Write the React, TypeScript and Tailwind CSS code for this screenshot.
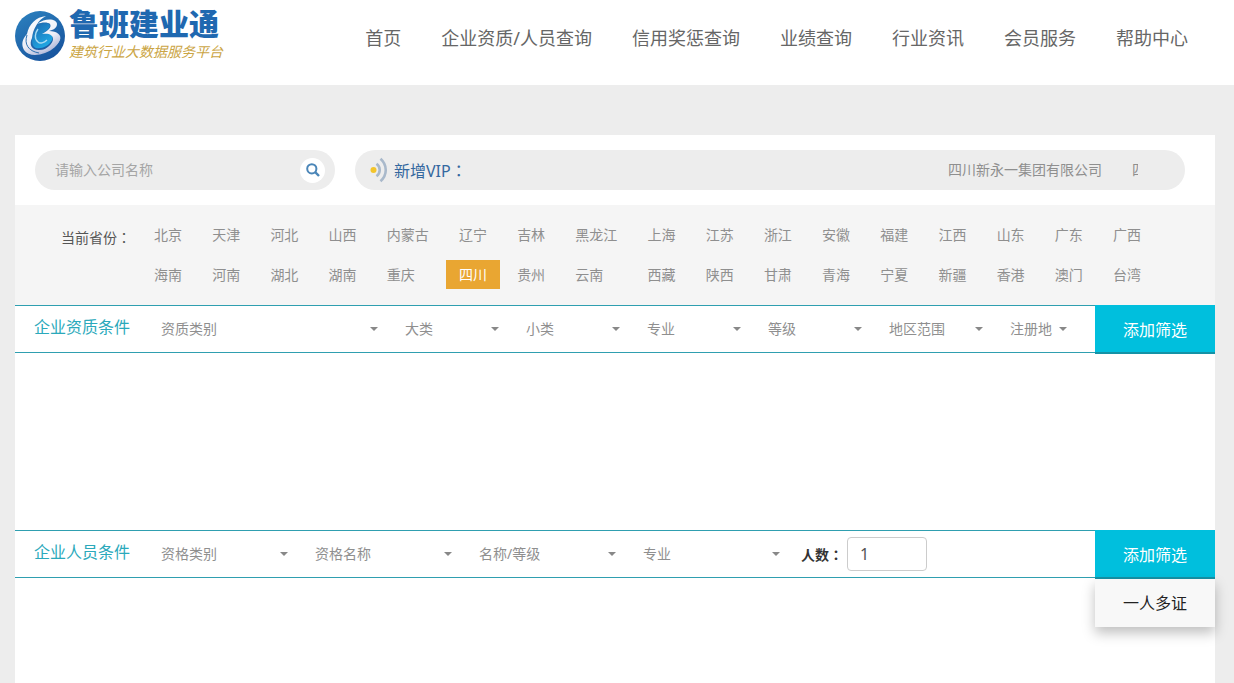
import React, { useState } from 'react';
import clsx from 'clsx';

const NAV = ['首页', '企业资质/人员查询', '信用奖惩查询', '业绩查询', '行业资讯', '会员服务', '帮助中心'];

const PROVINCES = [
  '北京', '天津', '河北', '山西', '内蒙古', '辽宁', '吉林', '黑龙江', '上海', '江苏', '浙江', '安徽', '福建', '江西', '山东', '广东', '广西',
  '海南', '河南', '湖北', '湖南', '重庆', '四川', '贵州', '云南', '西藏', '陕西', '甘肃', '青海', '宁夏', '新疆', '香港', '澳门', '台湾',
];

const COMPANY_FILTERS = [
  { label: '资质类别', width: 'w-[217px]' },
  { label: '大类', width: 'w-[94px]' },
  { label: '小类', width: 'w-[94px]' },
  { label: '专业', width: 'w-[94px]' },
  { label: '等级', width: 'w-[94px]' },
  { label: '地区范围', width: 'w-[94px]' },
  { label: '注册地', width: 'w-[57px]' },
];

const STAFF_FILTERS = [
  { label: '资格类别', width: 'w-[127px]' },
  { label: '资格名称', width: 'w-[137px]' },
  { label: '名称/等级', width: 'w-[137px]' },
  { label: '专业', width: 'w-[137px]' },
];

const Logo: React.FC = () => (
  <a href="#" className="flex items-center gap-1 shrink-0">
    <svg width="50" height="50" viewBox="0 0 50 50" aria-hidden="true">
      <defs>
        <linearGradient id="logoBall" x1="0" y1="0" x2="0.6" y2="1">
          <stop offset="0" stopColor="#2d83c0" />
          <stop offset="1" stopColor="#18559f" />
        </linearGradient>
        <linearGradient id="logoRibbon" x1="0" y1="0" x2="0.5" y2="1">
          <stop offset="0" stopColor="#ffffff" />
          <stop offset="0.65" stopColor="#eceef7" />
          <stop offset="1" stopColor="#b4bbdb" />
        </linearGradient>
        <linearGradient id="logoCore" x1="0" y1="0" x2="0.6" y2="1">
          <stop offset="0" stopColor="#1c67b0" />
          <stop offset="1" stopColor="#1fa9e4" />
        </linearGradient>
      </defs>
      <circle cx="25" cy="25" r="25" fill="url(#logoBall)" />
      <path d="M24 14C30 11 35 12 35 15C34 18 31 20 28 22C35 21 39 24 37 29C34 35 27 38 21 37C15 35 16 22 24 14Z" fill="url(#logoCore)" />
      <path
        d="M31 5C21 6 14 13 12 23C7 28 6 34 9 39C13 45 22 45 30 42C38 39 43 34 45 28C40 35 32 39 24 39C16 39 14 33 17 27C18 18 23 9 31 5Z"
        fill="url(#logoRibbon)"
      />
      <path
        d="M22 13C31 6 42 8 42 13C42 17 38 19 34 20C42 20 47 24 45 29C42 36 34 40 25 41C32 37 38 33 38 28C38 24 34 22 27 23C33 20 37 16 35 13C33 11 27 11 22 13Z"
        fill="url(#logoRibbon)"
      />
      <path d="M12 24C9 33 13 40 24 42" fill="none" stroke="#2c6fb1" strokeWidth="1" />
      <path d="M23 18C20 22 19 28 23 31C25 33 29 32 32 29" fill="none" stroke="#a9dcf3" strokeWidth="1.4" />
    </svg>
    <span className="flex flex-col whitespace-nowrap">
      <span className="text-3xl leading-7 font-black text-[#1f68b0]">鲁班建业通</span>
      <span className="mt-1 text-sm leading-5 italic text-[#cba544]">建筑行业大数据服务平台</span>
    </span>
  </a>
);

const BroadcastIcon: React.FC = () => (
  <svg width="18" height="26" viewBox="0 0 18 26" fill="none" strokeWidth="2.6" aria-hidden="true">
    <circle cx="3.5" cy="13" r="3" fill="#f3c52c" />
    <path d="M6.5 6.8C10.8 10 10.8 16 6.5 19.2" stroke="#a9b9cb" />
    <path d="M10.5 1.8C17.5 8 17.5 18 10.5 24.2" stroke="#a9b9cb" />
  </svg>
);

// The TC face centres the full-width colon in its cell
const Colon: React.FC = () => <span lang="zh-TW" className="font-['Noto_Sans_CJK_TC',sans-serif]">：</span>;

interface FilterSelectProps {
  label: string;
  width: string;
}

const FilterSelect: React.FC<FilterSelectProps> = ({ label, width }) => (
  <span className={clsx('relative flex items-center', width)}>
    <select aria-label={label} className="w-full appearance-none bg-transparent text-sm leading-5 text-[#8f8f8f] outline-none">
      <option>{label}</option>
    </select>
    <svg className="absolute right-0 pointer-events-none" width="8" height="4" viewBox="0 0 8 4" aria-hidden="true">
      <path d="M0 0H8L4 4Z" fill="#888" />
    </svg>
  </span>
);

interface FilterBarProps {
  title: string;
  filters: FilterSelectProps[];
  children?: React.ReactNode;
  menu?: React.ReactNode;
}

const FilterBar: React.FC<FilterBarProps> = ({ title, filters, children, menu }) => (
  <div className="flex h-12 border-y border-[#2f9fb0]">
    <h2 className="w-[146px] pl-[19px] text-base leading-[42px] text-[#2ba9bb] whitespace-nowrap">{title}</h2>
    <div className="flex flex-1 items-center gap-[27px]">
      {filters.map((f) => (
        <FilterSelect key={f.label} label={f.label} width={f.width} />
      ))}
      {children}
    </div>
    <div className="relative w-[120px] h-[49px] -mt-px shrink-0">
      <button className="w-full h-full pt-[2px] bg-[#00bfdd] border-b-2 border-[#1592a6] text-base text-white">添加筛选</button>
      {menu}
    </div>
  </div>
);

const App: React.FC = () => {
  const [province, setProvince] = useState('四川');
  const [count, setCount] = useState('1');

  return (
    <div className="min-h-screen flex flex-col bg-[#ededed] font-['Noto_Sans','Noto_Sans_CJK_SC',sans-serif]">
      <header className="flex justify-between h-[85px] pl-[15px] pr-[46px] bg-white">
        <div className="pt-[10px]">
          <Logo />
        </div>
        <nav className="flex gap-10 pt-6 text-lg leading-7 text-[#666] whitespace-nowrap">
          {NAV.map((item) => (
            <a key={item} href="#">{item}</a>
          ))}
        </nav>
      </header>

      <main className="flex-1 flex flex-col mt-[50px] ml-[15px] mr-[19px] bg-white">
        {/* Search + new VIP ticker */}
        <div className="flex gap-5 pt-[15px] pb-[15px] pl-5 pr-[30px]">
          <form className="flex items-center w-[300px] h-10 pl-5 pr-[10px] rounded-full bg-[#ededed]" onSubmit={(e) => e.preventDefault()}>
            <input
              type="text"
              aria-label="公司名称"
              placeholder="请输入公司名称"
              className="flex-1 min-w-0 bg-transparent text-sm text-[#555] placeholder:text-[#a5a5a5] outline-none"
            />
            <button type="submit" aria-label="搜索" className="flex items-center justify-center size-[25px] rounded-full bg-white">
              <svg width="14" height="14" viewBox="0 0 14 14" fill="none" stroke="#4b86b8" aria-hidden="true">
                <circle cx="5.8" cy="5.8" r="4.6" strokeWidth="2" />
                <path d="M9.2 9.2L13 13" strokeWidth="2.4" />
              </svg>
            </button>
          </form>
          <div className="flex flex-1 items-center h-10 pl-[15px] pr-[47px] rounded-full bg-[#ededed]">
            <BroadcastIcon />
            <span className="ml-[6px] text-base text-[#34689f]">新增VIP<Colon /></span>
            <div className="flex gap-[30px] w-[190px] ml-auto overflow-hidden whitespace-nowrap text-sm text-[#8f8f8f]">
              <a href="#" className="shrink-0">四川新永一集团有限公司</a>
              <a href="#" className="shrink-0">四川</a>
            </div>
          </div>
        </div>

        {/* Province picker */}
        <div className="flex h-[100px] pt-[15px] pl-[46px] pr-[61px] bg-[#f5f5f5] text-sm">
          <span className="w-20 leading-[34px] text-[#555] whitespace-nowrap">当前省份<Colon /></span>
          <div className="flex-1 grid grid-cols-[repeat(4,54px)_68px_repeat(2,54px)_68px_repeat(9,54px)] justify-between content-start gap-y-[11px]">
            {PROVINCES.map((name) => (
              <a
                key={name}
                href="#"
                onClick={() => setProvince(name)}
                className={clsx(
                  'justify-self-start h-[29px] px-[13px] leading-[29px] whitespace-nowrap',
                  name === province ? 'bg-[#e9a632] text-white' : 'text-[#8f8f8f]'
                )}
              >
                {name}
              </a>
            ))}
          </div>
        </div>

        <FilterBar title="企业资质条件" filters={COMPANY_FILTERS} />
        <div className="h-[177px]" />

        <FilterBar
          title="企业人员条件"
          filters={STAFF_FILTERS}
          menu={
            <button className="absolute top-full left-0 w-full h-12 bg-[#f8f8f8] shadow-[0_6px_12px_rgba(0,0,0,0.25)] text-base text-[#222]">
              一人多证
            </button>
          }
        >
          <label className="flex items-center gap-1 -ml-[6px] text-sm font-bold text-[#333] whitespace-nowrap">
            <span>人数<Colon /></span>
            <input
              type="text"
              value={count}
              onChange={(e) => setCount(e.target.value)}
              className="w-20 h-[34px] px-3 rounded border border-[#ccc] bg-white text-base font-normal text-[#555] outline-none"
            />
          </label>
        </FilterBar>
      </main>
    </div>
  );
};

export default App;
